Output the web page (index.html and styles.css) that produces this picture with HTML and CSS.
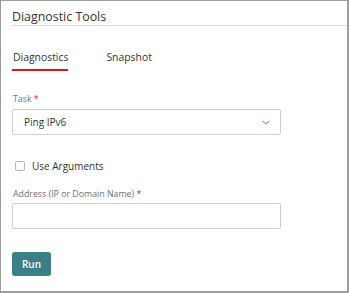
FILE: index.html
```html
<!DOCTYPE html>
<html>
<head>
<meta charset="utf-8">
<link rel="stylesheet" href="styles.css">
</head>
<body>
<div class="panel">
  <div class="header">Diagnostic Tools</div>
  <div class="content">
    <div class="tabs">
      <span class="tab active">Diagnostics</span>
      <span class="tab">Snapshot</span>
    </div>
    <div class="label task-label">Task <span class="req">*</span></div>
    <div class="select">
      <span class="select-value">Ping IPv6</span>
      <svg class="chevron" width="8" height="5" viewBox="0 0 8 5"><path d="M0.5 0.8 L4 4 L7.5 0.8" fill="none" stroke="#72aab0" stroke-width="1.1"/></svg>
    </div>
    <label class="check-row">
      <span class="checkbox"></span>
      <span class="check-text">Use Arguments</span>
    </label>
    <div class="label addr-label">Address (IP or Domain Name) <span class="req">*</span></div>
    <div class="input"></div>
    <button class="run">Run</button>
  </div>
</div>
</body>
</html>
```
FILE: styles.css
```css
html, body {
  margin: 0;
  padding: 0;
  background: #fff;
}
body {
  font-family: "Open Sans", "Liberation Sans", sans-serif;
  color: #333;
}
.panel {
  width: 349px;
  height: 293px;
  box-sizing: border-box;
  border-top: 1px solid #9d9d9d;
  border-left: 1px solid #9d9d9d;
  border-right: 2px solid #9d9d9d;
  border-bottom: 2px solid #9d9d9d;
  overflow: hidden;
}
.header {
  margin-left: 11px;
  padding-top: 7px;
  height: 17px;
  line-height: 17px;
  font-size: 12.4px;
  color: #333;
  border-bottom: 1px solid #dcdcdc;
}
.content {
  padding-left: 11px;
  display: flex;
  flex-direction: column;
  align-items: flex-start;
}
.tabs {
  margin-top: 24px;
  display: flex;
  gap: 38px;
}
.tab {
  font-size: 10.4px;
  line-height: 14px;
  padding-bottom: 5px;
  color: #333;
  border-bottom: 2px solid transparent;
}
.tab.active {
  border-bottom-color: #d7191f;
  padding-left: 1px;
}
.label {
  font-size: 8.8px;
  line-height: 11px;
  color: #707070;
  padding-left: 1px;
}
.req {
  color: #d7191f;
}
.task-label {
  margin-top: 23px;
}
.select {
  margin-top: 4px;
  width: 269px;
  height: 26px;
  box-sizing: border-box;
  border: 1px solid #cfcfcf;
  border-radius: 2px;
  display: flex;
  align-items: center;
  justify-content: space-between;
  padding: 0 10px 0 11px;
}
.select-value {
  font-size: 10px;
  color: #333;
}
.chevron {
  display: block;
  margin-top: 1px;
}
.check-row {
  margin-top: 24px;
  height: 14px;
  display: flex;
  align-items: center;
  padding-left: 3px;
}
.checkbox {
  width: 10px;
  height: 10px;
  box-sizing: border-box;
  border: 1px solid #b5b5b5;
  border-radius: 2px;
  background: #fff;
}
.check-text {
  margin-left: 7px;
  font-size: 10px;
  line-height: 14px;
  color: #333;
}
.addr-label {
  margin-top: 16px;
}
.input {
  margin-top: 3px;
  width: 269px;
  height: 26px;
  box-sizing: border-box;
  border: 1px solid #cfcfcf;
  border-radius: 2px;
}
.run {
  margin-top: 23px;
  width: 39px;
  height: 24px;
  border: none;
  border-radius: 3px;
  background: #3b7e87;
  color: #fff;
  font-family: "Open Sans", "Liberation Sans", sans-serif;
  font-size: 10px;
  font-weight: 600;
  padding: 0;
}
```
